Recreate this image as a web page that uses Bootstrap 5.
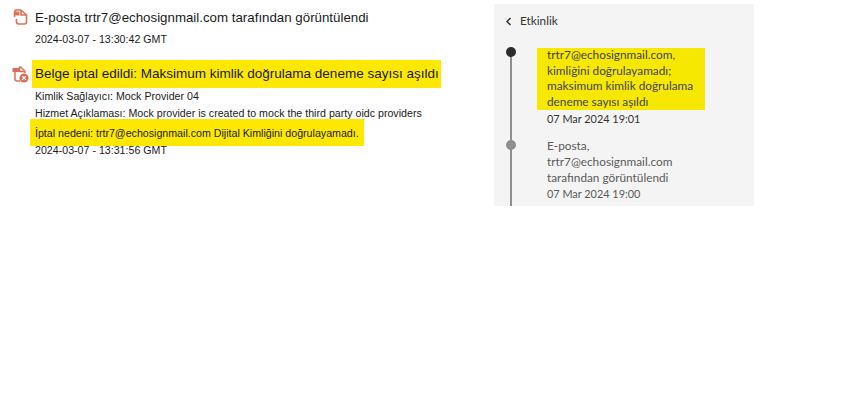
<!DOCTYPE html>
<html lang="tr"><head><meta charset="utf-8"><title>Etkinlik</title>
<link href="https://cdn.jsdelivr.net/npm/bootstrap@5.3.0/dist/css/bootstrap.min.css" rel="stylesheet">
<style>
html,body{height:404px;overflow:hidden}
body{background:#fff;color:#1a1a1a;font-family:"Liberation Sans",Arial,sans-serif}
.shell{height:404px;padding-top:4px}
.leftpane{width:494px;flex:none;padding-left:12px}
.evt-ico{width:16px;height:16px;flex:none;margin-right:7px}
.evt-title{font-size:13.3px;line-height:20px;margin:0}
.evt-small{font-size:10.65px;line-height:17px;margin:0}
.ev1{padding-top:4px}
.ev1 .evt-ico{margin-top:1px}
.ev1 .evt-small{margin-top:3px}
.ev2{margin-top:12px}
.ev2 .evt-ico{margin-top:5px;margin-left:-1px;width:18px;height:18px;margin-right:3px}
.ev2 .evt-small{padding-left:3px}
.hl{background:#ffe800;display:block}
.hl-big{padding:4px 3px 4px 3px;width:409px;white-space:nowrap;font-size:13.5px}
.ev2 .hl-small{margin:-3.5px 0 -4.5px -2px;padding:6.5px 5px 4px 5px;width:334px;white-space:nowrap}
.panel{width:260px;height:202px;background:#f4f4f4;flex:none;font-family:Lato,"Open Sans",sans-serif;font-size:11.8px;color:#4b4b4b}
.panel-head{height:34px;padding-left:11px;line-height:14px;color:#333}
.chev{width:7px;height:9px;margin-right:8px}
.tl{position:relative;margin-left:16px;margin-top:10px;border-left:2px solid #8e8e8e;height:158px}
.tl-item{position:relative;padding-left:35px;margin-bottom:11px;line-height:16px;white-space:nowrap}
.dot{position:absolute;left:-6px;width:10px;height:10px;border-radius:50%}
.dot-a{background:#2c2c2c;top:-1px}
.dot-b{background:#8e8e8e;top:2px}
.act-hl{background:#f6e800;color:#444;width:168px;margin-left:-10px;padding-left:10px;height:62px;display:flow-root}
.act-hl div{line-height:15.7px}
.act-hl div:first-child{margin-top:-1px}
.act-when{line-height:16px;color:#333;margin-top:1px;font-size:10.9px}
.gr{color:#5a5a5a}
</style></head><body>
<div class="shell d-flex">
 <div class="leftpane">
  <div class="ev1 d-flex">
   <svg class="evt-ico" viewBox="0 0 16 16" fill="none" stroke="#d9705a" stroke-width="1.6"><path d="M9 1H4.5A2 2 0 0 0 2.5 3v5M9 1l5.5 5v7a2 2 0 0 1-2 2h-6a2 2 0 0 1-2-2v-3"/><path d="M9 1v5h5.5"/><path d="M2 2.5h5.5v4H2z" fill="#d9705a" stroke="none"/></svg>
   <div>
    <p class="evt-title">E-posta trtr7@echosignmail.com tarafından görüntülendi</p>
    <p class="evt-small">2024-03-07 - 13:30:42 GMT</p>
   </div>
  </div>
  <div class="ev2 d-flex">
   <svg class="evt-ico" viewBox="0 0 18 18" fill="none" stroke="#d9705a" stroke-width="1.5"><path d="M9 1.5l5 4.5v2M4 7v7a2 2 0 0 0 2 2h3"/><path d="M1.5 3h7.5v4H1.5z" fill="#d9705a" stroke="none"/><path d="M8.5 1.5v5h5"/><circle cx="13" cy="13" r="4.6" fill="#d9705a" stroke="none"/><path d="M11.2 11.2l3.6 3.6M14.8 11.2l-3.6 3.6" stroke="#fff" stroke-width="1.2"/></svg>
   <div>
    <p class="evt-title hl hl-big">Belge iptal edildi: Maksimum kimlik doğrulama deneme sayısı aşıldı</p>
    <p class="evt-small">Kimlik Sağlayıcı: Mock Provider 04</p>
    <p class="evt-small">Hizmet Açıklaması: Mock provider is created to mock the third party oidc providers</p>
    <p class="evt-small hl hl-small">İptal nedeni: trtr7@echosignmail.com Dijital Kimliğini doğrulayamadı.</p>
    <p class="evt-small">2024-03-07 - 13:31:56 GMT</p>
   </div>
  </div>
 </div>
 <div class="panel">
  <div class="panel-head d-flex align-items-center"><svg class="chev" viewBox="0 0 7 9" fill="none" stroke="#333" stroke-width="1.5"><path d="M5.5 1L2 4.5 5.5 8"/></svg><span>Etkinlik</span></div>
  <div class="tl">
   <div class="tl-item"><span class="dot dot-a"></span>
    <div class="act-hl"><div>trtr7@echosignmail.com,</div><div>kimliğini doğrulayamadı;</div><div>maksimum kimlik doğrulama</div><div>deneme sayısı aşıldı</div></div>
    <div class="act-when">07 Mar 2024 19:01</div></div>
   <div class="tl-item gr"><span class="dot dot-b"></span>
    <div>E-posta,</div><div>trtr7@echosignmail.com</div><div>tarafından görüntülendi</div><div class="act-when gr mt-0">07 Mar 2024 19:00</div></div>
  </div>
 </div>
</div>
</body></html>
